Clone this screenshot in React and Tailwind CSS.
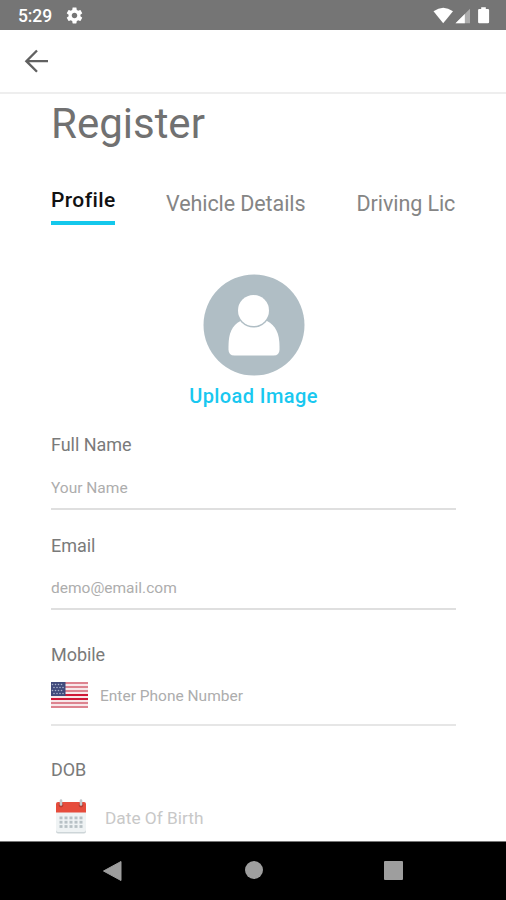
const tabs = ["Vehicle Details", "Driving Lic"];

const stripes = [0, 2, 4, 6, 8, 10, 12];
const dotRows = [18.5, 22.8, 27.1];
const dotCols = [4, 9, 14, 19, 24];

function StatusBar() {
  return (
    <div className="flex h-[30px] shrink-0 items-center bg-[#757575] pr-[15px] pl-[18px] text-white">
      <span className="w-[34px] text-[17.5px] leading-5 font-medium whitespace-nowrap">
        <span className="inline-block pt-[2px] tracking-[-0.1px]">5:29</span>
      </span>
      <svg
        className="ml-[13px] h-[19px] w-[19px]"
        viewBox="0 0 24 24"
        fill="currentColor"
        aria-hidden="true"
      >
        <path d="M19.43 12.98c.04-.32.07-.64.07-.98s-.03-.66-.07-.98l2.11-1.65c.19-.15.24-.42.12-.64l-2-3.46c-.12-.22-.39-.3-.61-.22l-2.49 1c-.52-.4-1.08-.73-1.69-.98l-.38-2.65C14.46 2.18 14.25 2 14 2h-4c-.25 0-.46.18-.49.42l-.38 2.65c-.61.25-1.17.59-1.69.98l-2.49-1c-.23-.09-.49 0-.61.22l-2 3.46c-.13.22-.07.49.12.64l2.11 1.65c-.04.32-.07.65-.07.98s.03.66.07.98l-2.11 1.65c-.19.15-.24.42-.12.64l2 3.46c.12.22.39.3.61.22l2.49-1c.52.4 1.08.73 1.69.98l.38 2.65c.03.24.24.42.49.42h4c.25 0 .46-.18.49-.42l.38-2.65c.61-.25 1.17-.59 1.69-.98l2.49 1c.23.09.49 0 .61-.22l2-3.46c.12-.22.07-.49-.12-.64l-2.11-1.65zM12 15.5c-1.93 0-3.5-1.57-3.5-3.5s1.57-3.5 3.5-3.5 3.5 1.57 3.5 3.5-1.57 3.5-3.5 3.5z" />
      </svg>
      <svg
        className="ml-auto h-[17px] w-[58px]"
        viewBox="0 0 58 17"
        fill="currentColor"
        aria-hidden="true"
      >
        <path d="M0.5 4.2Q10.2-2.8 20 4.2L10.2 16.3Z" />
        <path d="M22.5 16.3 37 1.8V16.3Z" fillOpacity="0.4" />
        <path d="M22.5 16.3 31.8 7V16.3Z" />
        <path d="M48.2 0.2h4.6v1.7h2.1q1.2 0 1.2 1.2v12q0 1.2-1.2 1.2h-8.6q-1.2 0-1.2-1.2v-12q0-1.2 1.2-1.2h1.9z" />
      </svg>
    </div>
  );
}

function AppBar() {
  return (
    <header className="flex h-16 shrink-0 items-center border-b-2 border-[#eeeeee] pl-[22px]">
      <svg
        className="h-[30px] w-[30px] text-[#616161]"
        viewBox="0 0 24 24"
        fill="none"
        stroke="currentColor"
        strokeWidth="1.9"
        aria-label="Back"
      >
        <path d="M20.800 12.100H4.200M12 3.600 3.500 12.100l8.500 8.500" />
      </svg>
    </header>
  );
}

function Avatar() {
  return (
    <svg className="ml-px h-[102px] w-[102px]" viewBox="0 0 102 102" aria-hidden="true">
      <circle cx="51" cy="51" r="50.5" fill="#b0bec5" />
      <path
        d="M37.5 47C29 51 25.5 60 25.5 72v3.500q0 6 6 6h39q6 0 6-6V72c0-12-4-21-12.500-25z"
        fill="#fff"
      />
      <circle cx="50.500" cy="36.500" r="17" fill="#b0bec5" />
      <circle cx="50.500" cy="36.500" r="15.500" fill="#fff" />
    </svg>
  );
}

function Flag() {
  return (
    <svg className="h-[26px] w-[37px]" viewBox="0 0 37 26" aria-hidden="true">
      <rect width="37" height="26" rx="1" fill="#f8e8ea" />
      {stripes.map((n) => (
        <rect
          key={n}
          y={n * 2}
          width="37"
          height="2"
          fill={n === 6 || n === 8 ? "#cf1736" : "#dd8490"}
        />
      ))}
      <rect width="14.500" height="14" fill="#414a7c" />
      {[2, 5, 8, 11].map((y, row) =>
        [1.5, 4.5, 7.5, 10.5].map((x) => (
          <circle
            key={`${x}-${y}`}
            cx={x + (row % 2) * 1.5}
            cy={y + 0.5}
            r="0.8"
            fill="#a9b3cb"
          />
        )),
      )}
    </svg>
  );
}

function CalendarIcon() {
  return (
    <svg className="h-[35px] w-[30px]" viewBox="0 0 30 35" aria-hidden="true">
      <rect y="5" width="30" height="29.500" rx="2" fill="#cdd5d8" />
      <rect y="5" width="30" height="28" rx="2" fill="#eff3f4" />
      <path d="M0 5q0-2 2-2h26q2 0 2 2v8.500H0z" fill="#e64c3c" />
      {[5, 25].map((x) => (
        <g key={x}>
          <circle cx={x} cy="6" r="2.4" fill="#b83c32" />
          <rect x={x - 1.3} y="0.3" width="2.6" height="6.500" rx="1.3" fill="#c3c9cc" />
        </g>
      ))}
      {dotRows.map((y) =>
        dotCols.map((x) => (
          <rect key={`${x}-${y}`} x={x - 0.5} y={y - 1} width="3" height="2.800" fill="#b7c1c5" />
        )),
      )}
    </svg>
  );
}

function Label({ children }) {
  return (
    <p className="text-[18px] leading-5 tracking-[-0.05px] whitespace-nowrap text-[#7a7a7a]">
      {children}
    </p>
  );
}

function Placeholder({ children }) {
  return (
    <p className="text-[15.5px] leading-5 whitespace-nowrap text-[#adadad]">
      {children}
    </p>
  );
}

function NavigationBar() {
  return (
    <nav className="flex h-[59px] shrink-0 justify-between border-t border-[#777] bg-black pt-[19px] pr-[103px] pl-[102px]">
      <svg className="h-[21px] w-[21px]" viewBox="0 0 21 21" aria-label="Back">
        <path d="M1.500 10 19 0.500v19z" fill="#9e9e9e" stroke="#9e9e9e" strokeLinejoin="round" />
      </svg>
      <div className="h-[18px] w-[18px] rounded-full bg-[#9e9e9e]" />
      <div className="h-[19px] w-[19px] rounded-[1px] bg-[#9e9e9e]" />
    </nav>
  );
}

export default function App() {
  return (
    <div className="flex h-[900px] w-[506px] flex-col overflow-hidden bg-white font-['Roboto',sans-serif]">
      <StatusBar />
      <AppBar />

      <main className="flex h-[747px] shrink-0 flex-col overflow-hidden pt-[6px] pr-[50px] pl-[51px]">
        <h1 className="text-[42px] leading-[48px] text-[#717171]">Register</h1>

        <div className="mt-10 flex h-[38px] items-start gap-[51px] whitespace-nowrap">
          <div className="w-16 shrink-0 border-b-4 border-[#14c8ec] pb-[9px] text-[21px] leading-6 font-medium tracking-[0.4px] text-[#111]">
            Profile
          </div>
          {tabs.map((tab) => (
            <div
              key={tab}
              className="pt-1 text-[21.5px] leading-6 tracking-[-0.08px] text-[#858585]"
            >
              {tab}
            </div>
          ))}
        </div>

        <div className="mt-12 flex flex-col items-center">
          <Avatar />
          <p className="mt-2 text-[20px] leading-6 font-medium tracking-[0.4px] text-[#19c8f0]">
            Upload Image
          </p>
        </div>

        <div className="mt-[27px] flex h-[75px] shrink-0 flex-col justify-between border-b-2 border-[#dfdfdf] pb-[10px]">
          <Label>Full Name</Label>
          <Placeholder>Your Name</Placeholder>
        </div>

        <div className="mt-[26px] flex h-[74px] shrink-0 flex-col justify-between border-b-2 border-[#dfdfdf] pb-[10px]">
          <Label>Email</Label>
          <Placeholder>demo@email.com</Placeholder>
        </div>

        <div className="mt-[35px] flex h-[81px] shrink-0 flex-col justify-between border-b-2 border-[#e6e6e6] pb-4">
          <Label>Mobile</Label>
          <div className="flex items-center gap-3">
            <Flag />
            <div className="pt-[2px]">
              <Placeholder>Enter Phone Number</Placeholder>
            </div>
          </div>
        </div>

        <div className="mt-[34px] shrink-0">
          <Label>DOB</Label>
          <div className="mt-[19px] flex items-center gap-[19px] pl-[5px]">
            <CalendarIcon />
            <p className="pt-[3px] text-[17.3px] leading-5 text-[#c8c8c8]">
              Date Of Birth
            </p>
          </div>
        </div>
      </main>

      <NavigationBar />
    </div>
  );
}
